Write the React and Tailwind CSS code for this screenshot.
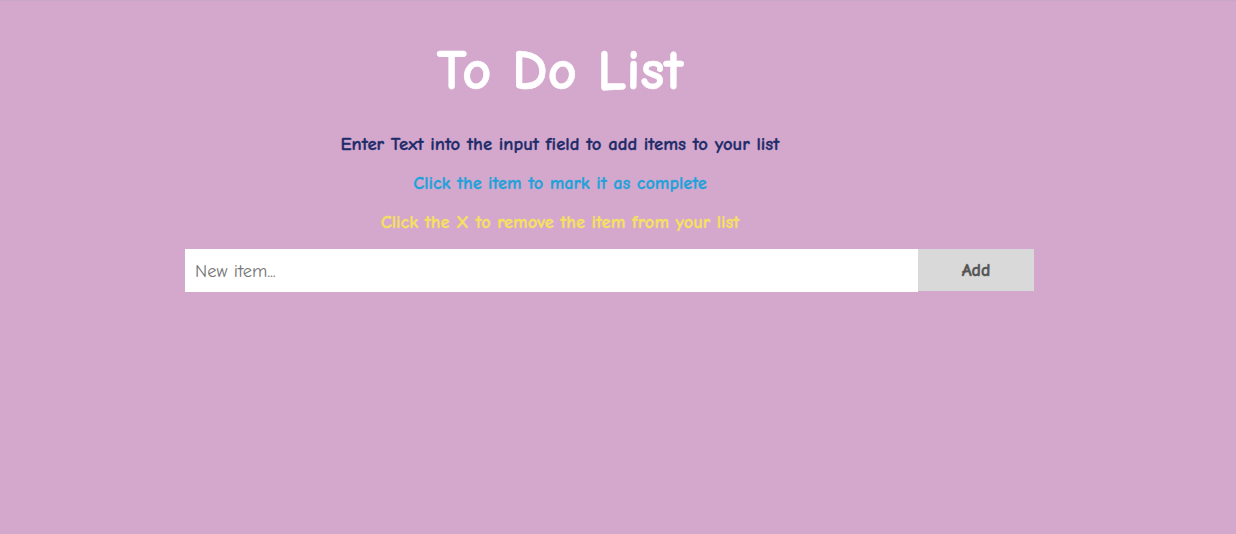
export default function App() {
  const font = { fontFamily: '"Comic Sans MS", "Comic Neue", "DejaVu Sans", sans-serif' };
  return (
    <div className="min-h-[534px] w-full bg-[#d4a8cd] border-t border-[#c9a7c4]" style={font}>
      <div className="ml-[185px] w-[750px] pt-[35px]">
        <h1 className="text-center text-[57px] font-bold text-white leading-[70px] [-webkit-text-stroke:0.6px_currentColor]">
          To Do List
        </h1>
        <p className="mt-[28px] text-center text-[18.7px] font-bold text-[#1e2c6a] leading-[20px] [-webkit-text-stroke:0.3px_currentColor]">
          Enter Text into the input field to add items to your list
        </p>
        <p className="mt-[20px] text-center text-[18.3px] font-bold text-[#1fa2d9] leading-[20px] [-webkit-text-stroke:0.3px_currentColor]">
          Click the item to mark it as complete
        </p>
        <p className="mt-[18px] text-center text-[18.4px] font-bold text-[#f6e061] leading-[20px] [-webkit-text-stroke:0.3px_currentColor]">
          Click the X to remove the item from your list
        </p>
        <div className="mt-[17px] flex w-[849px]">
          <input
            className="h-[43px] w-[733px] bg-white px-[10px] text-[18.5px] text-[#333] placeholder:text-[#757575] outline-none"
            placeholder="New item..."
            style={font}
          />
          <button
            className="h-[42px] w-[116px] bg-[#d9d9d9] text-[18px] font-bold text-[#555] [-webkit-text-stroke:0.4px_currentColor]"
            style={font}
          >
            Add
          </button>
        </div>
      </div>
    </div>
  );
}
